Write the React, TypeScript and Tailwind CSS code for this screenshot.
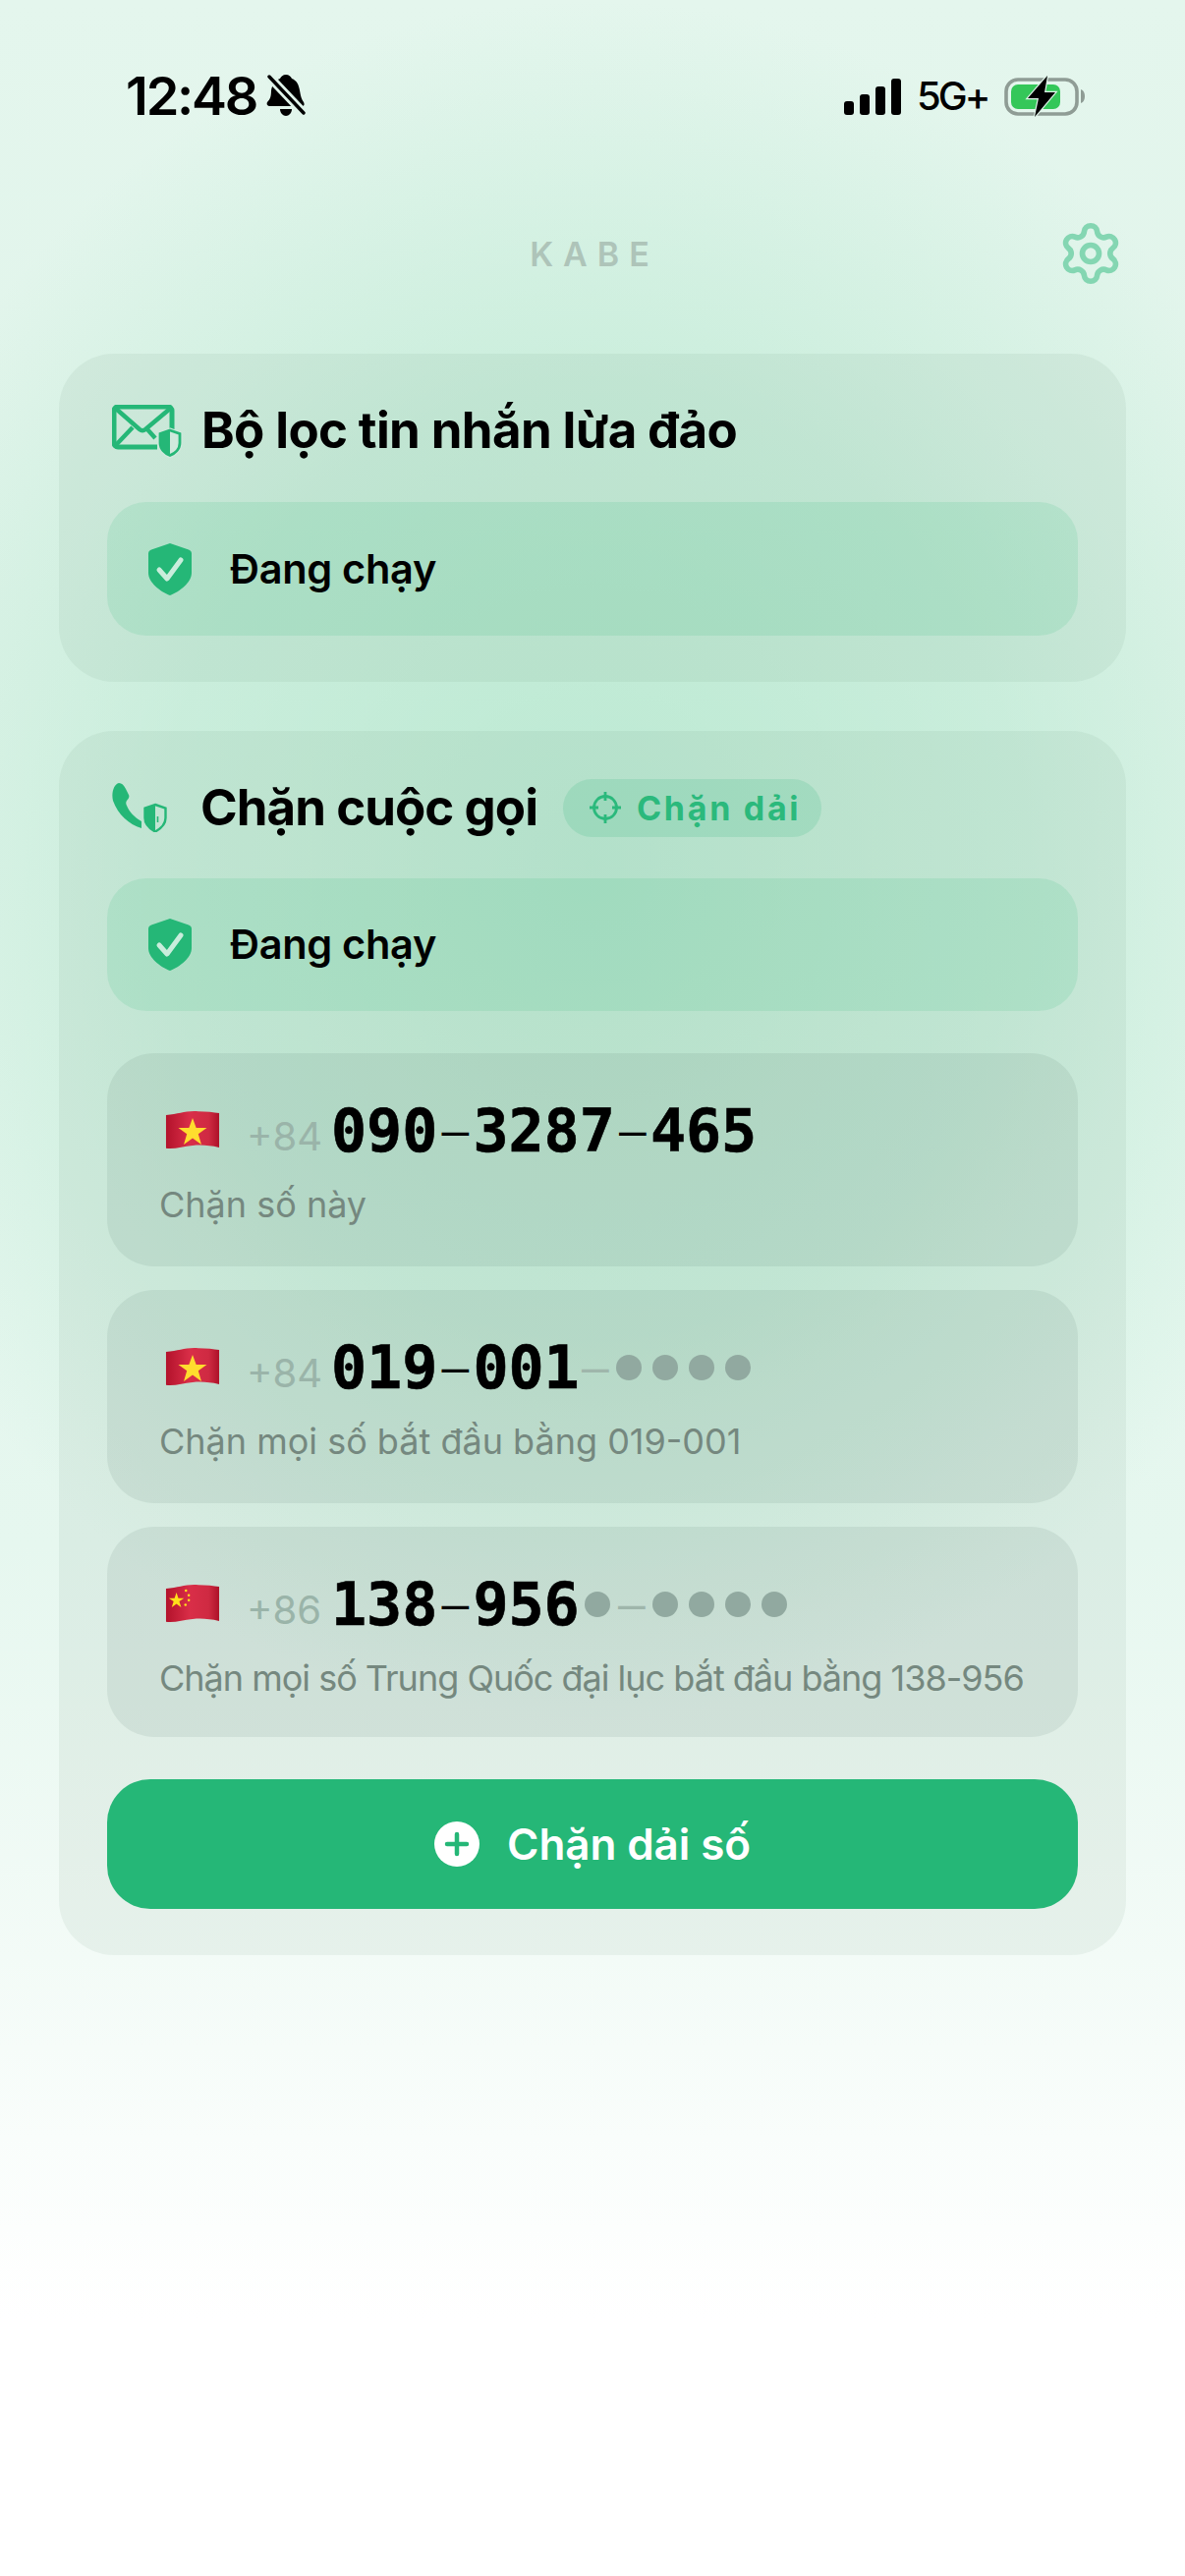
import { Settings } from "lucide-react";

const G = "#25b777";

function Bell() {
  return (
    <svg width="40" height="44" viewBox="0 0 40 44">
      <path d="M20 0c3 0 5 2 6 4 5 2 7 6 8 12 1 6 2 9 4 12 1 2 1 4-2 4H4c-3 0-4-2-3-4 3-3 4-6 4-12 1-6 4-10 9-12 1-2 3-4 6-4z" fill="#000" />
      <path d="M14 35h12c0 4-3 7-6 7s-6-3-6-7z" fill="#000" />
      <path d="M3 2 38 39" stroke="#e0f4ea" strokeWidth="9" />
      <path d="M3 2 38 39" stroke="#000" strokeWidth="3.4" strokeLinecap="round" />
    </svg>
  );
}

function Battery() {
  return (
    <svg width="84" height="42" viewBox="0 0 84 42">
      <rect x="2" y="4" width="72" height="35" rx="12" fill="none" stroke="#8f9c95" strokeWidth="3.6" />
      <rect x="7" y="9" width="50" height="25" rx="7" fill="#34c759" />
      <path d="M78 14c3 1 4 4 4 7s-1 6-4 7z" fill="#8f9c95" />
      <path d="M44 0 24 23h11l-4 19 21-25H41z" fill="#000" stroke="#e0f4ea" strokeWidth="2.4" paintOrder="stroke" />
    </svg>
  );
}

function MailShield() {
  return (
    <svg width="72" height="54" viewBox="0 0 72 54" className="shrink-0">
      <path d="M46 43H6a4 4 0 0 1-4-4V6a4 4 0 0 1 4-4h51a4 4 0 0 1 4 4v19" fill="none" stroke={G} strokeWidth="5" />
      <path d="M4 4l24 21c2 1.600 4 1.600 6 0L59 4M3 42l18-19M36 25l8 9" fill="none" stroke={G} strokeWidth="4.400" />
      <path d="M59 25l11 4v10c0 7-6 12-11 14-5-2-11-7-11-14V29z" fill="#d0e9dd" stroke="#d0e9dd" strokeWidth="3" />
      <path d="M59 26l10 3.500v9.500c0 6-5 10.500-10 12.500-5-2-10-6.500-10-12.500v-9.500z" fill="none" stroke={G} strokeWidth="2.800" />
      <path d="M59 26v25.500c-5-2-10-6.500-10-12.500v-9.500z" fill={G} />
    </svg>
  );
}

function PhoneShield() {
  return (
    <svg width="56" height="50" viewBox="0 0 56 50" className="shrink-0">
      <path d="M7 0c3 0 5 2 7 6l3 6c1 2 0 4-2 6-1 1-1 3 0 5 3 7 7 11 15 16v7C17 42 6 32 1 18-1 10 2 1 7 0z" fill={G} />
      <path d="M44 22l10.500 3.500v10c0 6-5 11-10.500 14-5.500-3-10.500-8-10.500-14v-10z" fill="none" stroke={G} strokeWidth="2.400" />
      <path d="M44 22v27.500c-5.500-3-10.500-8-10.500-14v-10z" fill={G} />
      <path d="M46.500 34v6" stroke={G} strokeWidth="1.600" />
    </svg>
  );
}

function ShieldCheck() {
  return (
    <svg width="44" height="53" viewBox="0 0 44 53" className="shrink-0">
      <path d="M22 0l19 6.500q3 1 3 4V30c0 10-12 19-22 23C12 49 0 40 0 30V10.500q0-3 3-4z" fill={G} />
      <path d="M11 27l8 9 14-19" fill="none" stroke="#c9eddc" strokeWidth="5" strokeLinecap="round" strokeLinejoin="round" />
    </svg>
  );
}

function Crosshair() {
  return (
    <svg width="32" height="32" viewBox="0 0 32 32" className="shrink-0">
      <circle cx="16" cy="16" r="11.500" fill="none" stroke="#2bb97c" strokeWidth="2.800" />
      <path d="M16 0v9M16 23v9M0 16h9M23 16h9" stroke="#2bb97c" strokeWidth="2.800" />
    </svg>
  );
}

function Flag({ cn }: { cn?: boolean }) {
  const id = cn ? "cn" : "vn";
  return (
    <svg width="56" height="41" viewBox="0 0 58 42" className="shrink-0 ml-[6px]">
      <defs>
        <linearGradient id={id} x1="0" x2="1" y1="0" y2="0">
          <stop offset="0" stopColor="#b3122b" />
          <stop offset="0.45" stopColor="#d92e48" />
          <stop offset="0.8" stopColor="#cf2a42" />
          <stop offset="1" stopColor="#ad1229" />
        </linearGradient>
      </defs>
      <path d="M1 5c14-1 20-5 34-4 9 0 16 1 22 2v36c-10-2-18-3-28-2-10 1-18 4-28 3z" fill={`url(#${id})`} />
      {cn ? (
        <g fill="#ffe01b">
          <path d="M12 9l2 6h6l-5 3.500 2 6-5-3.500-5 3.500 2-6L4 15h6z" />
          <circle cx="22" cy="7" r="1.300" />
          <circle cx="25" cy="12" r="1.300" />
          <circle cx="25" cy="17" r="1.300" />
          <circle cx="21.500" cy="22" r="1.300" />
        </g>
      ) : (
        <path d="M29 8l3.800 10.500H44l-9 6.500 3.300 11-9.300-6.800L19.700 36l3.300-11-9-6.500h11.200z" fill="#ffdd2e" />
      )}
    </svg>
  );
}

function Dot() {
  return (
    <span className="w-[37px] h-[44px] flex items-center justify-center">
      <span className="block w-[26px] h-[26px] rounded-full bg-[#91a9a0]" />
    </span>
  );
}

function Dash({ masked }: { masked?: boolean }) {
  return (
    <span className={`text-center text-[46px] font-normal [-webkit-text-stroke:0px_black] ${masked ? "w-[32px] text-[#9fb6ab]" : "w-[36px] text-black"}`}>–</span>
  );
}

function StatusPill({ h }: { h: string }) {
  return (
    <div className={`${h} rounded-[40px] bg-[#25b777]/[0.13] flex items-center pl-[42px] gap-[39px]`}>
      <ShieldCheck />
      <span className="text-[41.5px] font-semibold text-black tracking-[-0.3px]">Đang chạy</span>
    </div>
  );
}

function NumberCard({ cc, a, mask, sub, cn, h, subClass }: { cc: string; a: string; mask?: "d" | "c"; sub: string; cn?: boolean; h: string; subClass?: string }) {
  return (
    <div className={`${h} rounded-[48px] bg-[#35574a]/[0.09] pl-[53px] pt-[50px] flex flex-col`}>
      <div className="flex items-center h-[56px]">
        <Flag cn={cn} />
        <span className="ml-[27px] mt-[14px] w-[86px] text-[40px] text-[#9ab4a9] leading-none">{cc}</span>
        <div className="mt-[2px] flex items-center text-[60px] font-bold leading-none font-['DejaVu_Sans_Mono',monospace] text-black [-webkit-text-stroke:0.6px_black]">
          {a.split("-").map((part, i) => (
            <span key={i} className="flex items-center">
              {i > 0 && <Dash />}
              <span>{part}</span>
            </span>
          ))}
          {mask === "d" && (
            <>
              <Dash masked />
              <Dot /><Dot /><Dot /><Dot />
            </>
          )}
          {mask === "c" && (
            <>
              <Dot />
              <Dash masked />
              <Dot /><Dot /><Dot /><Dot />
            </>
          )}
        </div>
      </div>
      <div className={`mt-[25px] text-[36px] leading-[46px] text-[#75887f] ${subClass ?? ""}`}>{sub}</div>
    </div>
  );
}

export default function App() {
  return (
    <div className="w-[1206px] h-[2622px] overflow-hidden font-['Inter',sans-serif] bg-[radial-gradient(ellipse_800px_880px_at_603px_880px,rgba(170,228,199,0.68)_0%,rgba(170,228,199,0.42)_55%,rgba(170,228,199,0)_100%),linear-gradient(to_bottom,#e4f6ed_0%,#e0f4ea_25%,#e6f7ef_60%,#f3fbf7_76%,#ffffff_90%)]">
      <div className="h-[200px] pt-[72px] pl-[128px] pr-[100px] flex justify-between items-start">
        <div className="flex items-center gap-[10px] h-[52px]">
          <span className="text-[54px] leading-none font-semibold text-black tracking-[-2.2px]">12:48</span>
          <Bell />
        </div>
        <div className="flex items-center h-[52px]">
          <div className="flex items-end gap-[6px] h-[37px]">
            <div className="w-[10px] h-[14px] rounded-[3px] bg-black" />
            <div className="w-[10px] h-[21px] rounded-[3px] bg-black" />
            <div className="w-[10px] h-[29px] rounded-[3px] bg-black" />
            <div className="w-[10px] h-[37px] rounded-[3px] bg-black" />
          </div>
          <span className="ml-[16px] w-[89px] text-[40px] leading-none font-medium text-black tracking-[-3px]">5G+</span>
          <Battery />
        </div>
      </div>

      <div className="h-[114px] pt-[2px] pl-[66px] pr-[62px] grid grid-cols-[68px_1fr_68px] items-center">
        <div />
        <div className="text-center text-[34px] font-semibold tracking-[10px] text-[#aec4b9]">KABE</div>
        <Settings size={68} strokeWidth={2} color="#84d6b2" />
      </div>

      <div className="mt-[46px] mx-[60px] flex flex-col gap-[50px]">
        <section className="rounded-[56px] bg-[#4a6b5a]/[0.07] px-[49px] pb-[47px]">
          <div className="h-[151px] pt-[6px] flex items-center pl-[5px] gap-[19px]">
            <MailShield />
            <h2 className="text-[51px] font-bold text-black tracking-[-0.63px]">Bộ lọc tin nhắn lừa đảo</h2>
          </div>
          <StatusPill h="h-[136px]" />
        </section>

        <section className="rounded-[56px] bg-[#4a6b5a]/[0.07] px-[49px] pb-[47px]">
          <div className="h-[150px] pt-[6px] flex items-center pl-[5px]">
            <PhoneShield />
            <h2 className="ml-[34px] text-[51px] font-bold text-black tracking-[-0.95px]">Chặn cuộc gọi</h2>
            <div className="ml-[26px] h-[59px] w-[263px] rounded-full bg-[#25b777]/[0.16] flex items-center pl-[27px] gap-[16px]">
              <Crosshair />
              <span className="text-[34px] font-bold text-[#2bb97c] tracking-[2.7px]">Chặn dải</span>
            </div>
          </div>
          <StatusPill h="h-[135px]" />
          <div className="mt-[43px] flex flex-col gap-[24px]">
            <NumberCard h="h-[217px]" cc="+84" a="090-3287-465" sub="Chặn số này" />
            <NumberCard h="h-[217px]" cc="+84" a="019-001" mask="d" sub="Chặn mọi số bắt đầu bằng 019-001" />
            <NumberCard h="h-[214px]" cn cc="+86" a="138-956" mask="c" sub="Chặn mọi số Trung Quốc đại lục bắt đầu bằng 138-956" subClass="tracking-[-1px]" />
          </div>
          <button className="mt-[43px] w-full h-[132px] rounded-[44px] bg-[#25b777] flex items-center justify-center gap-[28px]">
            <svg width="46" height="46" viewBox="0 0 46 46">
              <circle cx="23" cy="23" r="23" fill="#fff" />
              <path d="M23 13v20M13 23h20" stroke={G} strokeWidth="4.500" strokeLinecap="round" />
            </svg>
            <span className="text-[44px] font-semibold text-white tracking-[-0.1px]">Chặn dải số</span>
          </button>
        </section>
      </div>
    </div>
  );
}
